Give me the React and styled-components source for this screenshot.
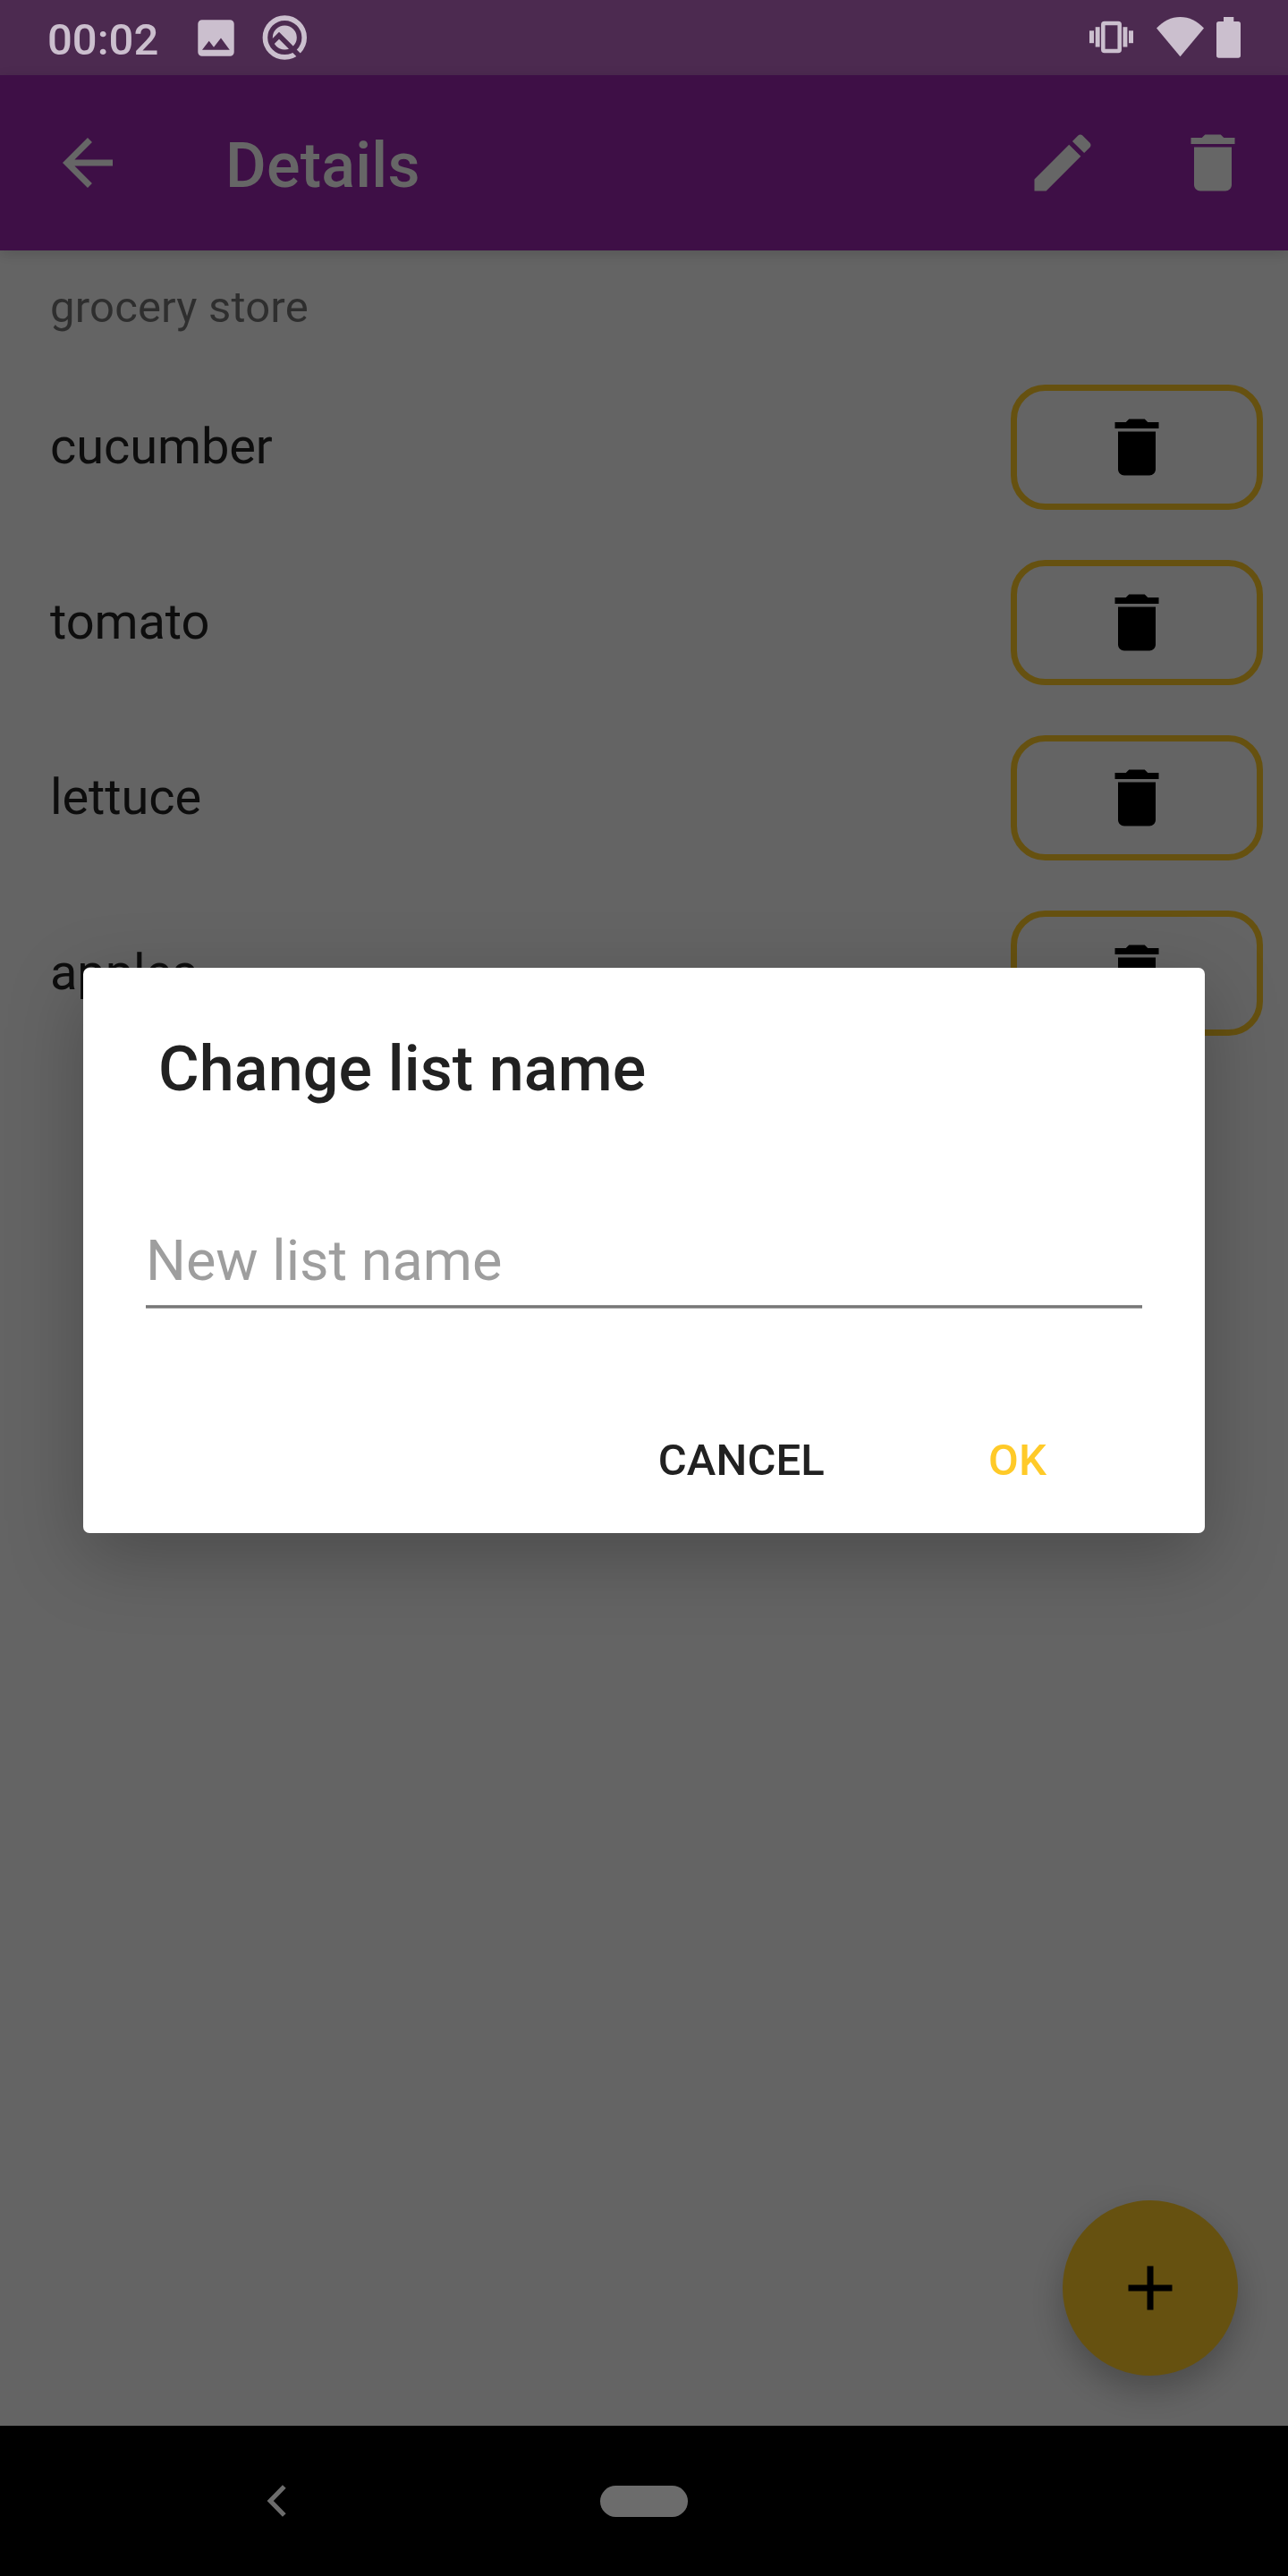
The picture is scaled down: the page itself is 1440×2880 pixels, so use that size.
import React from "react";
import styled, { createGlobalStyle } from "styled-components";

const GlobalStyle = createGlobalStyle`
  * { box-sizing: border-box; }
  body {
    margin: 0;
    font-family: Roboto, "Liberation Sans", sans-serif;
    background: #000;
  }
  button { font-family: inherit; cursor: pointer; }
`;

const Screen = styled.div`
  display: flex;
  flex-direction: column;
  width: 1440px;
  height: 2880px;
  overflow: hidden;
`;

const StatusBar = styled.div`
  display: flex;
  align-items: center;
  flex: none;
  height: 84px;
  background: #4c2a50;
  color: #cbbfce;
`;

const Clock = styled.span`
  width: 161px;
  margin-left: 53px;
  padding-top: 5px;
  font-size: 49px;
  font-weight: 500;
  line-height: 56px;
`;

const StatusIcon = styled.svg`
  display: block;
  flex: none;
  width: ${(p) => p.$width}px;
  height: 84px;
`;

const StatusSpacer = styled.div`
  flex: 1;
`;

const AppArea = styled.div`
  position: relative;
  display: flex;
  flex-direction: column;
  flex: 1;
  background: #fafafa;
`;

const AppBar = styled.header`
  display: flex;
  align-items: center;
  flex: none;
  height: 196px;
  padding-left: 14px;
  background: #9c27b0;
  color: #fff;
  box-shadow: 0 4px 14px rgba(0, 0, 0, 0.14);
`;

const IconButton = styled.button`
  display: flex;
  align-items: center;
  justify-content: center;
  width: 168px;
  height: 168px;
  padding: 0;
  border: 0;
  background: none;
  color: inherit;
`;

const Title = styled.h1`
  flex: 1;
  margin: 0;
  padding: 5px 0 0 70px;
  font-size: 70px;
  font-weight: 500;
  line-height: 82px;
  letter-spacing: 0.25px;
`;

const MaterialSvg = styled.svg`
  display: block;
  width: 84px;
  height: 84px;
  fill: currentColor;
`;

const StoreName = styled.div`
  flex: none;
  height: 122px;
  padding: 5px 56px 0;
  font-size: 49px;
  line-height: 117px;
  color: rgba(0, 0, 0, 0.54);
  letter-spacing: 0.18px;
`;

const ItemRow = styled.div`
  display: flex;
  align-items: center;
  justify-content: space-between;
  flex: none;
  height: 196px;
  padding: 0 28px 0 56px;
`;

const ItemName = styled.span`
  padding-bottom: 3px;
  font-size: 56px;
  line-height: 66px;
  letter-spacing: -0.12px;
  color: rgba(0, 0, 0, 0.87);
`;

const DeleteButton = styled.button`
  display: flex;
  align-items: center;
  justify-content: center;
  width: 282px;
  height: 140px;
  padding: 0;
  border: 7px solid #ffca28;
  border-radius: 38.5px;
  background: none;
  color: #000;
`;

const Fab = styled.button`
  position: absolute;
  right: 56px;
  bottom: 56px;
  display: flex;
  align-items: center;
  justify-content: center;
  width: 196px;
  height: 196px;
  padding: 0;
  border: 0;
  border-radius: 50%;
  background: #ffca28;
  color: #000;
  box-shadow: 0 16px 38px rgba(0, 0, 0, 0.26);
`;

const Scrim = styled.div`
  position: absolute;
  inset: 0;
  display: flex;
  justify-content: center;
  align-items: flex-start;
  padding-top: 998px;
  background: rgba(0, 0, 0, 0.6);
`;

const Dialog = styled.section`
  display: flex;
  flex-direction: column;
  width: 1254px;
  height: 632px;
  padding: 72px 70px 0;
  border-radius: 7px;
  background: #fff;
  box-shadow: 0 26px 84px rgba(0, 0, 0, 0.25);
`;

const DialogTitle = styled.h2`
  margin: 0 0 124px;
  padding-left: 14px;
  font-size: 70px;
  font-weight: 500;
  line-height: 82px;
  letter-spacing: 0.12px;
  color: #212121;
`;

const NameField = styled.input`
  display: block;
  width: 100%;
  height: 99px;
  padding: 0;
  border: 0;
  outline: 0;
  background: none;
  font: 400 63px Roboto, "Liberation Sans", sans-serif;
  color: #212121;
  &::placeholder {
    color: #9e9e9e;
    opacity: 1;
  }
`;

const Underline = styled.div`
  flex: none;
  height: 4px;
  border-top: 1px solid #8e8e8e;
  border-bottom: 1px solid #a0a0a0;
  background: #777;
`;

const Actions = styled.div`
  display: flex;
  justify-content: flex-end;
  gap: 71px;
  padding: 120px 51px 0 0;
`;

const DialogButton = styled.button`
  height: 100px;
  padding: 0 56px;
  border: 0;
  background: none;
  font-size: 49px;
  font-weight: 500;
  line-height: 100px;
  letter-spacing: 0.15px;
  color: ${(p) => p.$color};
`;

const NavBar = styled.nav`
  display: grid;
  grid-template-columns: 618px 204px 618px;
  align-items: center;
  justify-items: center;
  flex: none;
  height: 168px;
  background: #000;
`;

const BackChevron = styled.svg`
  display: block;
  width: 24px;
  height: 38px;
`;

const HomePill = styled.div`
  width: 98px;
  height: 35px;
  border-radius: 17.5px;
  background: #6c6c6c;
`;

const ICONS = {
  back: "M20 11H7.83l5.59-5.59L12 4l-8 8 8 8 1.41-1.41L7.83 13H20v-2z",
  edit: "M3 17.25V21h3.75L17.81 9.94l-3.75-3.75L3 17.25zM20.71 7.04c.39-.39.39-1.02 0-1.41l-2.34-2.34c-.39-.39-1.02-.39-1.41 0l-1.83 1.83 3.75 3.75 1.83-1.83z",
  trash:
    "M6 19c0 1.1.9 2 2 2h8c1.1 0 2-.9 2-2V7H6v12zM19 4h-3.5l-1-1h-5l-1 1H5v2h14V4z",
  add: "M19 13h-6v6h-2v-6H5v-2h6V5h2v6h6v2z",
};

const Icon = ({ name }) => (
  <MaterialSvg viewBox="0 0 24 24">
    <path d={ICONS[name]} />
  </MaterialSvg>
);

const ITEMS = ["cucumber", "tomato", "lettuce", "apples"];

export default function App() {
  return (
    <Screen>
      <GlobalStyle />
      <StatusBar>
        <Clock>00:02</Clock>
        <StatusIcon $width={76} viewBox="214 0 76 84">
          <path
            fill="currentColor"
            fillRule="evenodd"
            d="M225.8 22.3h31.4a4.5 4.5 0 0 1 4.5 4.5v31.4a4.5 4.5 0 0 1-4.5 4.5h-31.4a4.5 4.5 0 0 1-4.5-4.5V26.8a4.5 4.5 0 0 1 4.5-4.5zM226 55.8h30.8L247 42.6l-8 10.2-5.3-7.1z"
          />
        </StatusIcon>
        <StatusIcon $width={60} viewBox="290 0 60 84">
          <circle cx="318.3" cy="42" r="21.9" fill="none" stroke="currentColor" strokeWidth="5.6" />
          <circle cx="318.3" cy="42" r="13.5" fill="currentColor" />
          <path d="M303 48.7 312 39.7 336 63.7" fill="none" stroke="#4c2a50" strokeWidth="5.6" />
        </StatusIcon>
        <StatusSpacer />
        <StatusIcon $width={70} viewBox="1210 0 70 84">
          <g fill="currentColor">
            <rect x="1218" y="34.3" width="5" height="13.9" />
            <rect x="1224.7" y="30.2" width="4.9" height="22.3" />
            <rect x="1255.5" y="30.2" width="4.9" height="22.3" />
            <rect x="1262" y="34.3" width="5" height="13.9" />
          </g>
          <rect x="1233.3" y="26" width="18.4" height="31" rx="1.5" fill="none" stroke="currentColor" strokeWidth="4.5" />
        </StatusIcon>
        <StatusIcon $width={72} viewBox="1280 0 72 84">
          <path fill="currentColor" d="M1319.5 63.3 1293 31.5C1300.500 23.500 1309.500 19 1319.500 19s19 4.500 26.500 12.500z" />
        </StatusIcon>
        <StatusIcon $width={88} viewBox="1352 0 88 84">
          <path
            fill="currentColor"
            d="M1368 19h11.300v5h5a2.700 2.700 0 0 1 2.700 2.700v35.300a2.700 2.700 0 0 1-2.700 2.700h-21.600a2.700 2.700 0 0 1-2.700-2.700V26.700a2.700 2.700 0 0 1 2.700-2.700h5.300z"
          />
        </StatusIcon>
      </StatusBar>
      <AppArea>
        <AppBar>
          <IconButton aria-label="Back">
            <Icon name="back" />
          </IconButton>
          <Title>Details</Title>
          <IconButton aria-label="Edit">
            <Icon name="edit" />
          </IconButton>
          <IconButton aria-label="Delete">
            <Icon name="trash" />
          </IconButton>
        </AppBar>
        <StoreName>grocery store</StoreName>
        {ITEMS.map((item) => (
          <ItemRow key={item}>
            <ItemName>{item}</ItemName>
            <DeleteButton aria-label="Delete item">
              <Icon name="trash" />
            </DeleteButton>
          </ItemRow>
        ))}
        <Fab aria-label="Add">
          <Icon name="add" />
        </Fab>
        <Scrim>
          <Dialog>
            <DialogTitle>Change list name</DialogTitle>
            <NameField placeholder="New list name" />
            <Underline />
            <Actions>
              <DialogButton $color="#212121">CANCEL</DialogButton>
              <DialogButton $color="#ffca28">OK</DialogButton>
            </Actions>
          </Dialog>
        </Scrim>
      </AppArea>
      <NavBar>
        <BackChevron viewBox="297 2777 24 38">
          <path d="M317.800 2780 302.200 2796 317.800 2812" fill="none" stroke="#6c6c6c" strokeWidth="5.200" />
        </BackChevron>
        <HomePill />
      </NavBar>
    </Screen>
  );
}
